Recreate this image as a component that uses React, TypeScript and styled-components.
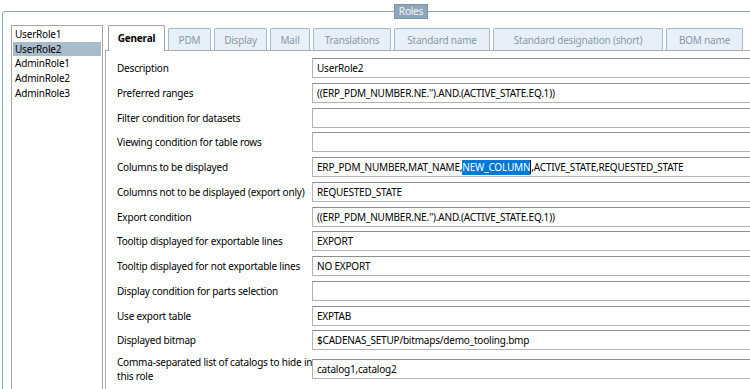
import styled, { createGlobalStyle } from 'styled-components'

const GlobalStyle = createGlobalStyle`
  html, body {
    margin: 0;
    padding: 0;
    background: #fff;
  }
  body {
    font-family: 'Noto Sans', 'Open Sans', sans-serif;
    font-size: 10px;
    letter-spacing: -0.2px;
    color: #000;
  }
`

type TabType = { label: string; width: number }

const tabs: TabType[] = [
  { label: 'General', width: 57 },
  { label: 'PDM', width: 43 },
  { label: 'Display', width: 53 },
  { label: 'Mail', width: 40 },
  { label: 'Translations', width: 78 },
  { label: 'Standard name', width: 96 },
  { label: 'Standard designation (short)', width: 170 },
  { label: 'BOM name', width: 77 },
]

const roles = ['UserRole1', 'UserRole2', 'AdminRole1', 'AdminRole2', 'AdminRole3']

const Window = styled.div`
  width: 750px;
  height: 389px;
  overflow: hidden;
  background: #fff;
`

const GroupBox = styled.div`
  position: relative;
  box-sizing: border-box;
  display: flex;
  width: 840px;
  height: 420px;
  margin: 11px 0 0 2px;
  padding: 13px 0 0 8px;
  border: 1px solid #8ea4b7;
  border-radius: 3px;
`

// title sits on top of the frame's border line
const Legend = styled.div`
  position: absolute;
  top: -8px;
  left: 391px;
  box-sizing: border-box;
  width: 34px;
  height: 15px;
  background: #8ea6ba;
  border: 1px solid #7b94a9;
  color: #f4f8fb;
  font-size: 10px;
  line-height: 13px;
  text-align: center;
`

const RoleList = styled.ul`
  box-sizing: border-box;
  width: 92px;
  margin: 0;
  padding: 1px;
  list-style: none;
  border: 1px solid #a6a6a6;
  background: #fff;
`

const RoleItem = styled.li<{ $selected?: boolean }>`
  height: 14.7px;
  line-height: 14.7px;
  padding-left: 2px;
  white-space: nowrap;
  background: ${(p) => (p.$selected ? '#a9bccc' : 'transparent')};
`

const TabArea = styled.div`
  display: flex;
  flex-direction: column;
  flex: 1;
  margin-left: 2px;
`

const TabStrip = styled.div`
  position: relative;
  z-index: 1;
  display: flex;
  align-items: flex-end;
  gap: 3px;
  height: 26px;
  margin-bottom: -1px;
  padding-left: 3px;
`

const Tab = styled.div<{ $active?: boolean; $width: number }>`
  box-sizing: border-box;
  display: flex;
  align-items: center;
  justify-content: center;
  width: ${(p) => p.$width}px;
  height: ${(p) => (p.$active ? 26 : 22)}px;
  margin-bottom: ${(p) => (p.$active ? 0 : 1)}px;
  padding-bottom: ${(p) => (p.$active ? 1 : 0)}px;
  border: 1px solid ${(p) => (p.$active ? '#a2a2a2' : '#a4b9cb')};
  border-bottom: none;
  border-radius: 2px 2px 0 0;
  background: ${(p) => (p.$active ? '#fff' : '#e7f0f8')};
  color: ${(p) => (p.$active ? '#000' : '#8899a9')};
  font-weight: ${(p) => (p.$active ? 700 : 400)};
  white-space: nowrap;
`

const Panel = styled.div`
  flex: 1;
  padding: 7px 0 0 11px;
  border: 1px solid #acacac;
  background: #fff;
`

const Form = styled.div`
  display: grid;
  grid-template-columns: 195px 1fr;
  row-gap: 4.75px;
  align-items: center;
`

const Label = styled.div`
  line-height: 14px;
  white-space: nowrap;
`

const Field = styled.div`
  box-sizing: border-box;
  display: flex;
  align-items: center;
  height: 20px;
  padding: 0 4px;
  border: 1px solid #b3b3b3;
  border-top-color: #8f8f8f;
  background: #fff;
  white-space: nowrap;
`

const Selection = styled.span`
  background: #0078d7;
  color: #fff;
  line-height: 15px;
`

const Caret = styled.span`
  display: inline-block;
  width: 1px;
  height: 14px;
  background: #000;
`

const rows: { label: React.ReactNode; value: React.ReactNode }[] = [
  { label: 'Description', value: 'UserRole2' },
  { label: 'Preferred ranges', value: "((ERP_PDM_NUMBER.NE.'').AND.(ACTIVE_STATE.EQ.1))" },
  { label: 'Filter condition for datasets', value: '' },
  { label: 'Viewing condition for table rows', value: '' },
  {
    label: 'Columns to be displayed',
    value: (
      <>
        ERP_PDM_NUMBER,MAT_NAME,<Selection>NEW_COLUMN</Selection>
        <Caret />
        ,ACTIVE_STATE,REQUESTED_STATE
      </>
    ),
  },
  { label: 'Columns not to be displayed (export only)', value: 'REQUESTED_STATE' },
  { label: 'Export condition', value: "((ERP_PDM_NUMBER.NE.'').AND.(ACTIVE_STATE.EQ.1))" },
  { label: 'Tooltip displayed for exportable lines', value: 'EXPORT' },
  { label: 'Tooltip displayed for not exportable lines', value: 'NO EXPORT' },
  { label: 'Display condition for parts selection', value: '' },
  { label: 'Use export table', value: 'EXPTAB' },
  { label: 'Displayed bitmap', value: '$CADENAS_SETUP/bitmaps/demo_tooling.bmp' },
  {
    label: (
      <>
        Comma-separated list of catalogs to hide in
        <br />
        this role
      </>
    ),
    value: 'catalog1,catalog2',
  },
]

const App = () => {
  return (
    <Window>
      <GlobalStyle />
      <GroupBox>
        <Legend>Roles</Legend>
        <RoleList>
          {roles.map((r) => (
            <RoleItem key={r} $selected={r === 'UserRole2'}>
              {r}
            </RoleItem>
          ))}
        </RoleList>
        <TabArea>
          <TabStrip>
            {tabs.map((t) => (
              <Tab key={t.label} $width={t.width} $active={t.label === 'General'}>
                {t.label}
              </Tab>
            ))}
          </TabStrip>
          <Panel>
            <Form>
              {rows.map((r, i) => (
                <>
                  <Label key={`l${i}`}>{r.label}</Label>
                  <Field key={`f${i}`}>{r.value}</Field>
                </>
              ))}
            </Form>
          </Panel>
        </TabArea>
      </GroupBox>
    </Window>
  )
}

export default App
